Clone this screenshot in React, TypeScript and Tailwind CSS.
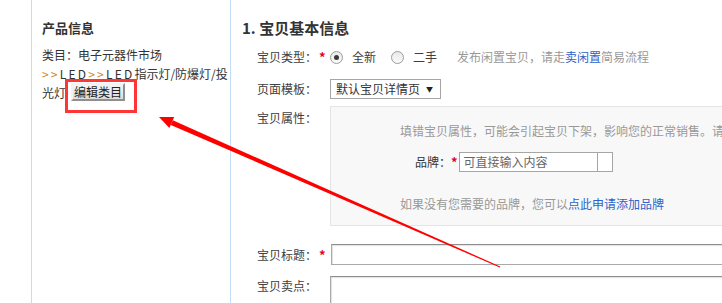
import React from 'react';

function Radio({ checked }: { checked?: boolean }) {
  return (
    <span className="inline-flex h-[13px] w-[13px] shrink-0 items-center justify-center rounded-full border border-[#9c9c9c] bg-gradient-to-b from-[#e9e9e9] to-[#fafafa]">
      {checked && <span className="h-[5px] w-[5px] rounded-full bg-[#3a3a3a]"></span>}
    </span>
  );
}

function Star() {
  return <span className="ml-[2px] text-[13px] font-bold text-[#e4002b]">*</span>;
}

export default function App() {
  return (
    <div className="relative h-[303px] w-[722px] overflow-hidden bg-white font-['Noto_Sans_CJK_SC',sans-serif] text-[12px] text-[#404040]">
      <div className="flex h-full">
        {/* left: product info */}
        <aside className="ml-[31px] h-full w-[200px] shrink-0 border-x border-[#c4dbf6] pl-[10px] pt-[18px]">
          <h3 className="text-[13px] font-bold leading-[20px] text-[#333]">产品信息</h3>
          <div className="mt-[7px] leading-[19px] text-[#333]">
            <div>类目：电子元器件市场</div>
            <div className="whitespace-nowrap">
              <span className="tracking-[2.2px]"><span className="text-[#c98a23]">&gt;&gt;</span>LED<span className="text-[#c98a23]">&gt;&gt;</span>LED</span>指示灯/防爆灯/投
            </div>
            <div className="whitespace-nowrap">
              光灯
              <button className="ml-[5px] h-[18px] border-2 border-t-[#f2f2f2] border-l-[#f2f2f2] border-r-[#8f8f8f] border-b-[#8f8f8f] bg-gradient-to-b from-[#f4f4f4] to-[#dcdcdc] px-[1px] align-top text-[12px] leading-[14px] text-[#222]">
                编辑类目
              </button>
            </div>
          </div>
        </aside>

        {/* right: basic info form */}
        <main className="min-w-0 flex-1 pl-[11px] pt-[18px]">
          <h2 className="whitespace-nowrap text-[15px] font-bold leading-[20px] text-[#333]">1. 宝贝基本信息</h2>

          <div className="pl-[15px]">
            <div className="mt-[9px] flex h-[20px] items-center whitespace-nowrap">
              <div className="w-[73px] shrink-0">
                宝贝类型：<Star />
              </div>
              <Radio checked />
              <span className="ml-[9px]">全新</span>
              <span className="ml-[15px] flex"><Radio /></span>
              <span className="ml-[9px]">二手</span>
              <span className="ml-[20px] text-[#999]">
                发布闲置宝贝，请走<span className="text-[#2f62c8]">卖闲置</span>简易流程
              </span>
            </div>

            <div className="mt-[12px] flex h-[20px] items-center whitespace-nowrap">
              <div className="w-[73px] shrink-0">页面模板：</div>
              <div className="flex h-[20px] w-[111px] items-center justify-between border border-[#a6a6a6] bg-white pl-[5px] pr-[7px] text-[#333]">
                <span>默认宝贝详情页</span>
                <span className="text-[7px] text-[#222]">▼</span>
              </div>
            </div>

            <div className="mt-[7px] flex whitespace-nowrap">
              <div className="w-[73px] shrink-0 pt-[3px] leading-[18px]">宝贝属性：</div>
              <div className="h-[120px] w-[420px] shrink-0 border border-[#e4e4e4] bg-[#f8f8f8] pl-[69px] pt-[14px]">
                <div className="leading-[20px] text-[#999]">填错宝贝属性，可能会引起宝贝下架，影响您的正常销售。请</div>
                <div className="mt-[11px] flex h-[20px] items-center pl-[15px]">
                  <span className="text-[#333]">品牌：</span>
                  <span className="text-[13px] font-bold text-[#e4002b]">*</span>
                  <div className="ml-[1px] flex h-[20px] w-[154px] border border-[#a6a6a6] bg-white">
                    <span className="flex-1 pl-[4px] leading-[18px] text-[#666]">可直接输入内容</span>
                    <span className="w-[15px] border-l border-[#a6a6a6]"></span>
                  </div>
                </div>
                <div className="mt-[22px] leading-[20px] text-[#999]">
                  如果没有您需要的品牌，您可以<span className="text-[#2f62c8]">点此申请添加品牌</span>
                </div>
              </div>
            </div>

            <div className="mt-[18px] flex h-[21px] items-center whitespace-nowrap">
              <div className="w-[74px] shrink-0">
                宝贝标题：<Star />
              </div>
              <div className="h-[21px] w-[420px] shrink-0 border border-[#a9a9a9] border-t-[#8e8e8e] bg-white shadow-[inset_1px_1px_1px_#e2e2e2]"></div>
            </div>

            <div className="mt-[11px] flex whitespace-nowrap">
              <div className="w-[73px] shrink-0 pt-[1px] leading-[18px]">宝贝卖点：</div>
              <div className="h-[60px] w-[420px] shrink-0 border border-[#a9a9a9] border-t-[#8e8e8e] bg-white shadow-[inset_1px_1px_1px_#e2e2e2]"></div>
            </div>
          </div>
        </main>
      </div>

      {/* annotation: red box and arrow */}
      <div className="pointer-events-none absolute left-[65px] top-[79px] h-[34px] w-[72px] border-[3px] border-[#ff3636]"></div>
      <svg className="pointer-events-none absolute left-0 top-0" width="722" height="303" viewBox="0 0 722 303">
        <polygon points="159,117 174.2,117.1 169.4,128.1" fill="#ff0000" />
        <polygon points="172.8,120.3 500.2,266.5 499.8,267.5 170.8,124.9" fill="#ff0000" />
      </svg>
    </div>
  );
}
